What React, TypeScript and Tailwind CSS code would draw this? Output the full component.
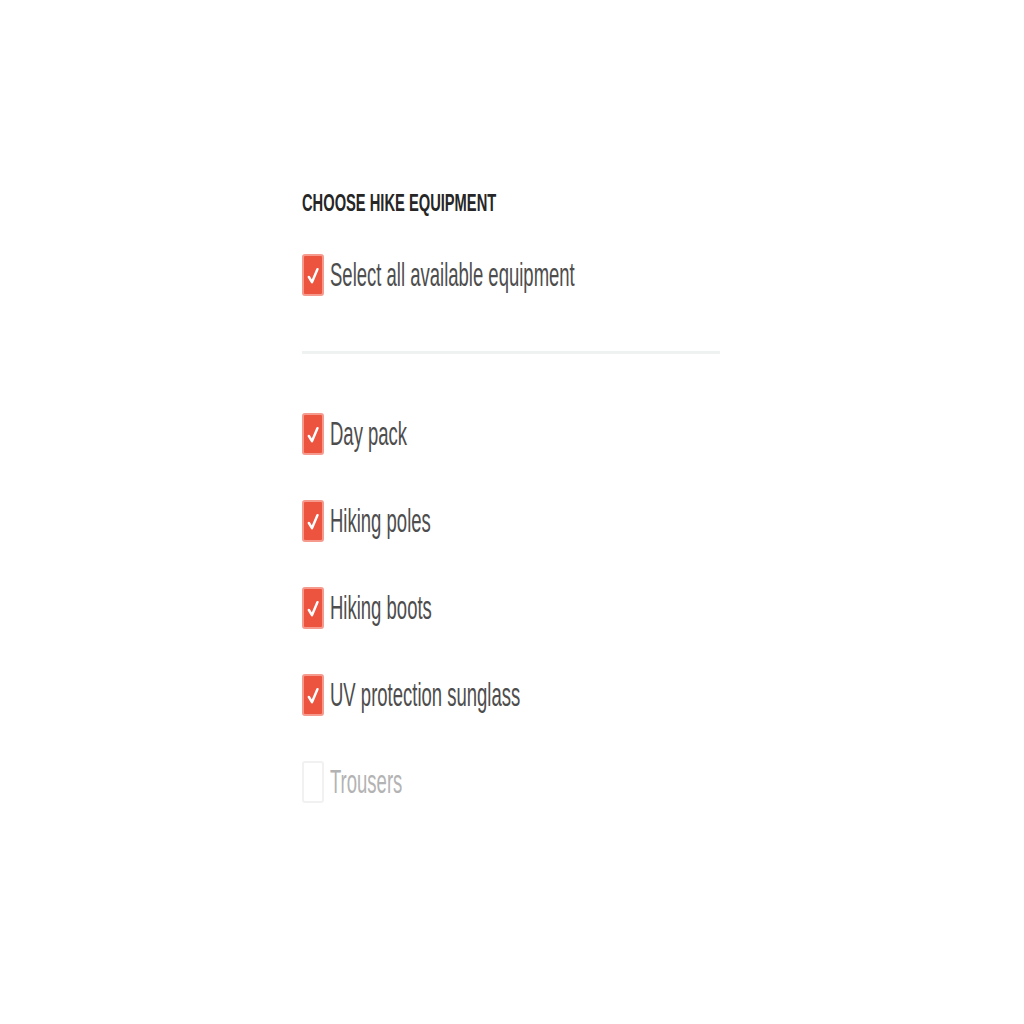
import type { ReactNode } from "react";

type Item = {
  label: string;
  checked: boolean;
};

const items: Item[] = [
  { label: "Day pack", checked: true },
  { label: "Hiking poles", checked: true },
  { label: "Hiking boots", checked: true },
  { label: "UV protection sunglass", checked: true },
  { label: "Trousers", checked: false },
];

function Box({ checked }: { checked: boolean }) {
  if (!checked) {
    return <span className="block h-[42px] w-[22px] shrink-0 rounded-[3px] border-2 border-[#f1f1f1] bg-white" />;
  }
  return (
    <span className="flex h-[42px] w-[22px] shrink-0 items-center justify-center rounded-[3px] border-2 border-[#f59a8c] bg-[#ec5440]">
      <svg className="h-[26px] w-[14px]" fill="none" preserveAspectRatio="none" viewBox="0 0 10 20">
        <path d="M2 11.5 L4.3 15.5 L8.2 5.5" stroke="#fff" strokeLinecap="round" strokeLinejoin="round" strokeWidth="1.8" />
      </svg>
    </span>
  );
}

function Row({ checked, children }: { checked: boolean; children: ReactNode }) {
  return (
    <label className="flex h-[44px] items-center gap-[6px]">
      <Box checked={checked} />
      <span
        className={`inline-block origin-center scale-y-[1.8] text-[18.5px] leading-none tracking-[0px] ${
          checked ? "text-[#4d4d4d]" : "text-[#b3b3b3]"
        }`}
      >
        {children}
      </span>
    </label>
  );
}

export default function App() {
  return (
    <div className="min-h-screen bg-white pl-[302px] pt-[190px] font-['Liberation_Sans',Arial,sans-serif]">
      <div className="flex h-[26px] items-center">
        <h2 className="inline-block origin-center scale-y-[1.65] text-[14.7px] font-bold leading-none text-[#262626]">
          CHOOSE HIKE EQUIPMENT
        </h2>
      </div>
      <div className="mt-[37px]">
        <Row checked>Select all available equipment</Row>
      </div>
      <div className="mt-[54px] h-[3px] w-[418px] bg-[#eef3f1]" />
      <div className="mt-[58px] flex flex-col gap-[43px]">
        {items.map((item) => (
          <Row checked={item.checked} key={item.label}>
            {item.label}
          </Row>
        ))}
      </div>
    </div>
  );
}
